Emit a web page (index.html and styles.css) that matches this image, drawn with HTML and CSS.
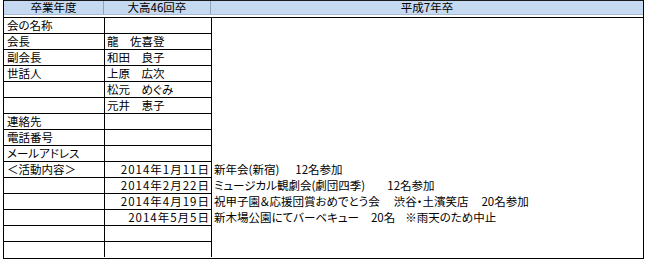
FILE: index.html
```html
<!DOCTYPE html>
<html lang="ja">
<head>
<meta charset="utf-8">
<link rel="stylesheet" href="styles.css">
</head>
<body>
<div class="sheet">
  <div class="head">
    <div class="hc">卒業年度</div>
    <div class="hc">大高46回卒</div>
    <div class="hc last">平成7年卒</div>
  </div>
  <div class="body">
    <div class="col c1">
      <div class="cell">会の名称</div>
      <div class="cell">会長</div>
      <div class="cell">副会長</div>
      <div class="cell">世話人</div>
      <div class="cell"></div>
      <div class="cell"></div>
      <div class="cell">連絡先</div>
      <div class="cell">電話番号</div>
      <div class="cell">メールアドレス</div>
      <div class="cell">＜活動内容＞</div>
      <div class="cell"></div>
      <div class="cell"></div>
      <div class="cell"></div>
      <div class="cell"></div>
      <div class="cell"></div>
    </div>
    <div class="col c2">
      <div class="cell"></div>
      <div class="cell">龍　佐喜登</div>
      <div class="cell">和田　良子</div>
      <div class="cell">上原　広次</div>
      <div class="cell">松元　めぐみ</div>
      <div class="cell">元井　恵子</div>
      <div class="cell"></div>
      <div class="cell"></div>
      <div class="cell"></div>
      <div class="cell date">2014年1月11日</div>
      <div class="cell date">2014年2月22日</div>
      <div class="cell date">2014年4月19日</div>
      <div class="cell date">2014年5月5日</div>
      <div class="cell"></div>
      <div class="cell"></div>
    </div>
    <div class="col c3">
      <div class="ln"></div>
      <div class="ln"></div>
      <div class="ln"></div>
      <div class="ln"></div>
      <div class="ln"></div>
      <div class="ln"></div>
      <div class="ln"></div>
      <div class="ln"></div>
      <div class="ln"></div>
      <div class="ln"><span>新年会(新宿)</span><span class="g16">12名参加</span></div>
      <div class="ln"><span>ミュージカル観劇会(劇団四季)</span><span class="g22">12名参加</span></div>
      <div class="ln"><span>祝甲子園＆応援団賞おめでとう会</span><span class="g14">渋谷・土濱笑店</span><span class="g13">20名参加</span></div>
      <div class="ln"><span>新木場公園にてバーベキュー</span><span class="g12">20名</span><span class="g10">※雨天のため中止</span></div>
      <div class="ln"></div>
      <div class="ln"></div>
    </div>
  </div>
</div>
</body>
</html>
```

FILE: styles.css
```css
html, body {
  margin: 0;
  padding: 0;
  background: #ffffff;
}

body {
  font-family: "Noto Sans CJK JP", "Noto Sans", sans-serif;
  font-size: 11.5px;
  color: #000000;
  font-feature-settings: "palt" 1;
}

.sheet {
  margin-left: 3px;
  width: 641px;
  box-sizing: border-box;
  border-top: 1px solid #1a1a1a;
  border-left: 1px solid #000000;
  border-right: 1px solid #000000;
}

.head {
  display: grid;
  grid-template-columns: 100px 107px 432px;
  background: #c5d9f1;
  border-bottom: 1px solid #a9bcd3;
  margin-bottom: 2px;
}

.hc {
  height: 13px;
  line-height: 13px;
  text-align: center;
  border-right: 1px solid #8fa3bb;
  white-space: nowrap;
}

.hc.last {
  border-right: none;
}

.body {
  display: grid;
  grid-template-columns: 101px 107px 431px;
  border-top: 1px solid #000000;
  border-bottom: 1px solid #000000;
}

.col {
  display: flex;
  flex-direction: column;
}

.cell {
  height: 15px;
  line-height: 15px;
  border-bottom: 1px solid #000000;
  border-right: 1px solid #000000;
  white-space: nowrap;
  overflow: hidden;
}

.cell:last-child {
  border-bottom: none;
}

.c1 .cell {
  padding-left: 3px;
}

.c2 .cell {
  padding-left: 2px;
}

.c2 .cell.date {
  text-align: right;
  padding-left: 0;
  padding-right: 1px;
  letter-spacing: 1px;
  font-feature-settings: normal;
}

.c3 .ln {
  height: 16px;
  line-height: 15px;
  padding-left: 2px;
  white-space: nowrap;
}

.g10 { margin-left: 10px; }
.g12 { margin-left: 12px; }
.g13 { margin-left: 13px; }
.g14 { margin-left: 14px; }
.g16 { margin-left: 16px; }
.g22 { margin-left: 22px; }
```
